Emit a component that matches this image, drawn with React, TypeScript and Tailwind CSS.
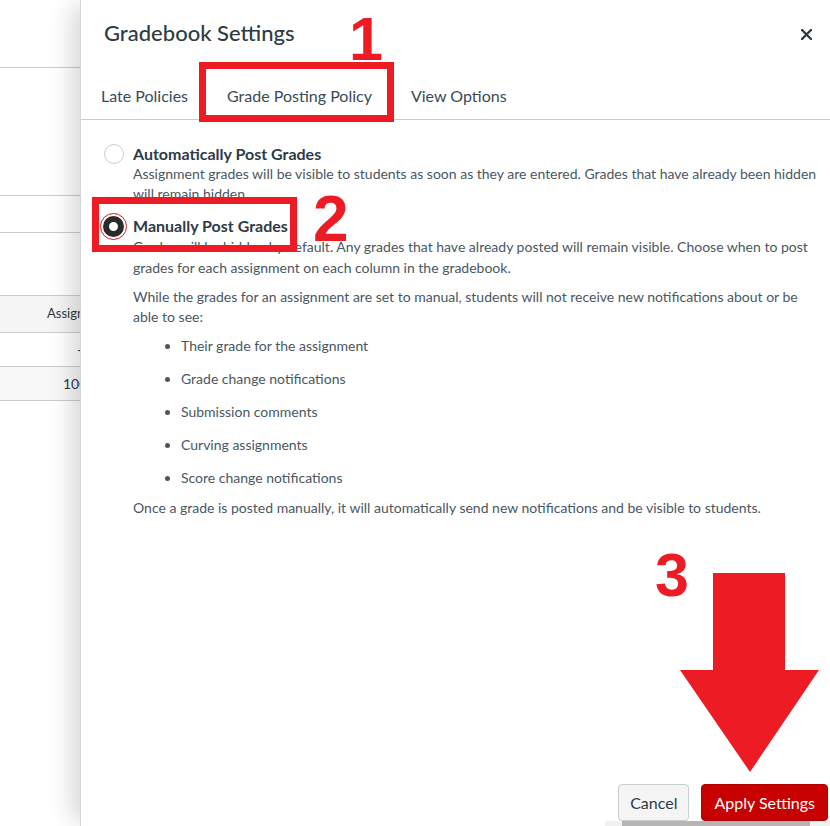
const bullets = [
  "Their grade for the assignment",
  "Grade change notifications",
  "Submission comments",
  "Curving assignments",
  "Score change notifications",
];

function Gradebook() {
  return (
    <div className="flex w-[80px] shrink-0 flex-col overflow-hidden bg-white text-[#2d3b45]">
      <div className="h-[68px] shrink-0 border-b border-[#c7cdd1]" />
      <div className="h-[128px] shrink-0 border-b border-[#c7cdd1]" />
      <div className="h-[37px] shrink-0 border-b border-[#c7cdd1]" />
      <div className="h-[63px] shrink-0 border-b border-[#c7cdd1]" />
      <div className="flex h-[37px] shrink-0 items-center border-b border-[#c7cdd1] bg-[#f5f5f5] pl-[47px] text-[13px] whitespace-nowrap">
        Assignments
      </div>
      <div className="flex h-[34px] shrink-0 items-center border-b border-[#c7cdd1] pl-[77px] text-[14px]">
        -
      </div>
      <div className="flex h-[34px] shrink-0 items-center border-b border-[#c7cdd1] bg-[#f8f8f8] pl-[63px] text-[14px] whitespace-nowrap">
        100%
      </div>
    </div>
  );
}

function Radio({ checked }: { checked?: boolean }) {
  if (checked) {
    return (
      <span className="flex h-[27px] w-[27px] shrink-0 items-center justify-center rounded-full border-[1.5px] border-[#d11a1a] -ml-[4px] -mr-[3px]">
        <span className="h-[21px] w-[21px] rounded-full border-[6px] border-[#2b2b2b] bg-white" />
      </span>
    );
  }
  return <span className="h-[20px] w-[20px] shrink-0 rounded-full border border-[#c7cdd1] bg-white" />;
}

export default function App() {
  return (
    <div
      className="relative flex h-[826px] w-[830px] overflow-hidden bg-white"
      style={{ fontFamily: "Lato, 'Noto Sans', sans-serif" }}
    >
      <Gradebook />

      <div className="relative z-10 flex flex-1 flex-col border-l border-[#d6d6d6] bg-white shadow-[-14px_0_22px_-6px_rgba(0,0,0,0.16)]">
        <div className="flex h-[72px] shrink-0 items-start justify-between pl-[23px] pr-[18px] pt-[19px]">
          <h1 className="text-[22px] leading-[28px] font-medium text-[#2d3b45]">Gradebook Settings</h1>
          <svg className="mt-[10px]" width="11" height="11" viewBox="0 0 11 11">
            <path d="M1 1 L10 10 M10 1 L1 10" stroke="#2d3b45" strokeWidth="2.4" strokeLinecap="round" />
          </svg>
        </div>

        <div className="flex h-[48px] shrink-0 items-center border-b border-[#c7cdd1] text-[16px] leading-[24px] text-[#394b58]">
          <span className="px-5">Late Policies</span>
          <span className="pl-[19px] pr-5">Grade Posting Policy</span>
          <span className="pl-[19px] pr-5">View Options</span>
        </div>

        <div className="flex-1 pl-[23px] pr-[8px] pt-[24px] text-[14px] leading-[20px] text-[#4a5762]">
          <div className="flex h-[20px] items-center gap-[9px]">
            <Radio />
            <span className="text-[16px] font-bold text-[#2d3b45]">Automatically Post Grades</span>
          </div>
          <p className="pl-[29px]">
            Assignment grades will be visible to students as soon as they are entered. Grades that have already been hidden will remain hidden.
          </p>

          <div className="mt-[12px] flex h-[20px] items-center gap-[9px]">
            <Radio checked />
            <span className="text-[16px] font-bold text-[#2d3b45]">Manually Post Grades</span>
          </div>
          <div className="pl-[29px] pr-[8px]">
            <p className="leading-[21px]">
              Grades will be hidden by default. Any grades that have already posted will remain visible. Choose when to post grades for each assignment on each column in the gradebook.
            </p>
            <p className="mt-[9px]">
              While the grades for an assignment are set to manual, students will not receive new notifications about or be able to see:
            </p>
            <ul className="mt-[9px] flex list-disc flex-col gap-[13px] pl-12">
              {bullets.map((b) => (
                <li key={b}>{b}</li>
              ))}
            </ul>
            <p className="mt-[10px]">
              Once a grade is posted manually, it will automatically send new notifications and be visible to students.
            </p>
          </div>
        </div>

        <div className="flex shrink-0 justify-end gap-3 pr-[2px] text-[16px]">
          <button className="h-[37px] rounded-[4px] border border-[#c7cdd1] bg-[#f5f5f5] px-[11px] text-[#2d3b45]">
            Cancel
          </button>
          <button className="h-[37px] rounded-[4px] border border-[#b00000] bg-[#c70000] px-[12px] text-white">
            Apply Settings
          </button>
        </div>
        <div className="flex h-[5px] shrink-0 justify-end">
          <div className="flex w-[225px] bg-[#f1f1f1] pl-[17px] pr-[20px]">
            <div className="h-full flex-1 bg-[#b5b5b5]" />
          </div>
        </div>
      </div>

      {/* annotations */}
      <div className="absolute left-[199px] top-[62px] z-20 h-[60px] w-[195px] border-[7px] border-[#ed1c24]" />
      <div className="absolute left-[92px] top-[197px] z-20 h-[55px] w-[205px] border-[7px] border-[#ed1c24]" />
      <span
        className="absolute left-[349px] top-[9px] z-20 text-[61px] leading-[61px] font-bold text-[#ed1c24]"
        style={{ fontFamily: "'Liberation Sans', Arial, sans-serif" }}
      >
        1
      </span>
      <span
        className="absolute left-[313px] top-[187px] z-20 text-[64px] leading-[64px] font-bold text-[#ed1c24]"
        style={{ fontFamily: "'Liberation Sans', Arial, sans-serif" }}
      >
        2
      </span>
      <span
        className="absolute left-[655px] top-[545px] z-20 text-[61px] leading-[61px] font-bold text-[#ed1c24]"
        style={{ fontFamily: "'Liberation Sans', Arial, sans-serif" }}
      >
        3
      </span>
      <svg className="absolute left-[680px] top-[573px] z-20" width="140" height="200" viewBox="0 0 140 200">
        <polygon points="33,0 105,0 105,97 139,97 70,199 0,97 33,97" fill="#ed1c24" />
      </svg>
    </div>
  );
}
